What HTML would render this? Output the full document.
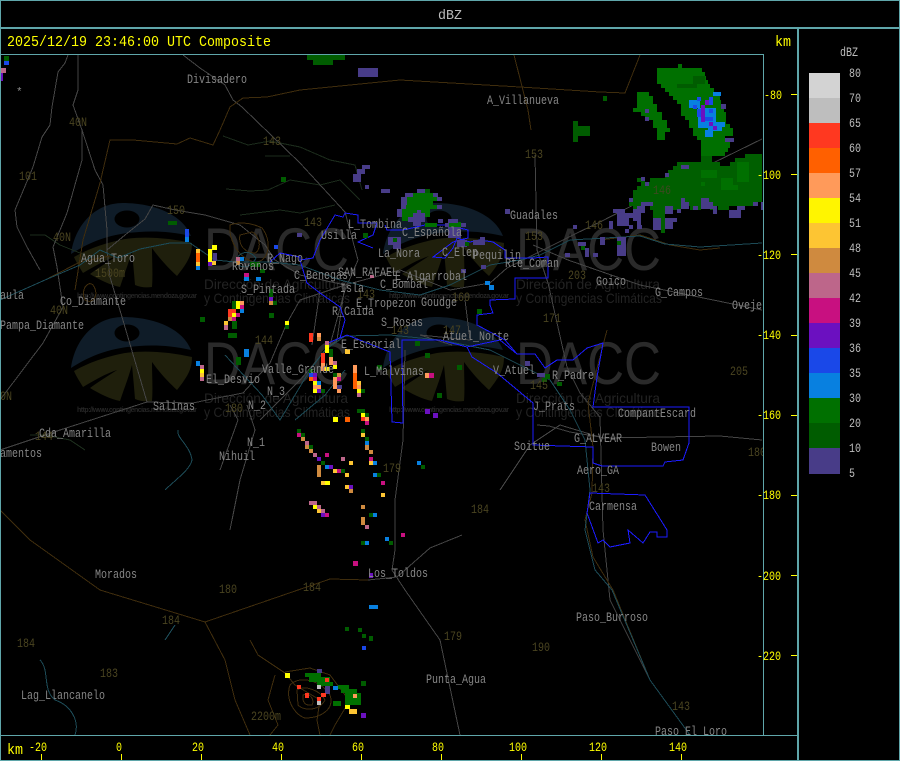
<!DOCTYPE html>
<html><head><meta charset="utf-8"><title>dBZ Composite</title>
<style>
html,body{margin:0;padding:0;background:#000;width:900px;height:761px;overflow:hidden}
svg{display:block}
text{font-family:"Liberation Mono","DejaVu Sans Mono",monospace}
.l text{font-size:12.5px;fill:#858585}
.n text{font-size:12.5px;fill:#4a4420}
.w{font-family:"Liberation Sans",sans-serif!important;fill:#2a2a2a}
.u{font-family:"Liberation Sans",sans-serif!important;fill:#262626;font-size:7px;font-weight:bold}
.s{font-family:"Liberation Sans",sans-serif!important;fill:#232323;font-size:14px}
.y text{font-size:12.5px;fill:#ffff00}
.c text{font-size:12.5px;fill:#bcbcbc}
</style></head><body>
<svg width="900" height="761" viewBox="0 0 900 761" xmlns="http://www.w3.org/2000/svg">
<defs>
<clipPath id="pl"><rect x="1" y="55" width="762" height="680"/></clipPath>
<g id="logo">
<path d="M71 254C75 225 95 203 123 203C155 203 183 215 191 236C165 230 145 231 127 233C105 236 88 243 71 254Z" fill="#0f1c28"/>
<ellipse cx="127" cy="219" rx="12.5" ry="8.5" fill="#000"/>
<path d="M74 257C90 248 105 243 125 239C145 236 170 238 192 243C192 255 188 262 177 276C165 265 157 255 152 248C152 262 153 275 152 287C145 288 140 287 135 285C134 272 133 262 132 251C128 265 124 275 120 287C110 285 100 280 90 274C98 268 108 262 117 256C105 260 95 266 83 273C80 268 76 262 74 257Z" fill="#1f1f0c"/>
</g>
</defs>
<rect width="900" height="761" fill="#000"/>
<g clip-path="url(#pl)">
<!-- watermark -->
<use href="#logo"/><use href="#logo" x="312"/><use href="#logo" y="114"/><use href="#logo" x="312" y="114"/>
<text class="w" x="204" y="270" font-size="60" textLength="145" lengthAdjust="spacingAndGlyphs">DACC</text>
<text class="w" x="516" y="270" font-size="60" textLength="145" lengthAdjust="spacingAndGlyphs">DACC</text>
<text class="w" x="204" y="384" font-size="60" textLength="145" lengthAdjust="spacingAndGlyphs">DACC</text>
<text class="w" x="516" y="384" font-size="60" textLength="145" lengthAdjust="spacingAndGlyphs">DACC</text>
<text class="s" x="204" y="289" textLength="144" lengthAdjust="spacingAndGlyphs">Dirección de Agricultura</text>
<text class="s" x="204" y="303" textLength="146" lengthAdjust="spacingAndGlyphs">y Contingencias Climáticas</text>
<text class="s" x="516" y="289" textLength="144" lengthAdjust="spacingAndGlyphs">Dirección de Agricultura</text>
<text class="s" x="516" y="303" textLength="146" lengthAdjust="spacingAndGlyphs">y Contingencias Climáticas</text>
<text class="s" x="204" y="403" textLength="144" lengthAdjust="spacingAndGlyphs">Dirección de Agricultura</text>
<text class="s" x="204" y="417" textLength="146" lengthAdjust="spacingAndGlyphs">y Contingencias Climáticas</text>
<text class="s" x="516" y="403" textLength="144" lengthAdjust="spacingAndGlyphs">Dirección de Agricultura</text>
<text class="s" x="516" y="417" textLength="146" lengthAdjust="spacingAndGlyphs">y Contingencias Climáticas</text>
<text class="u" x="77" y="298" textLength="120">http://www.contingencias.mendoza.gov.ar</text>
<text class="u" x="389" y="298" textLength="120">http://www.contingencias.mendoza.gov.ar</text>
<text class="u" x="77" y="412" textLength="120">http://www.contingencias.mendoza.gov.ar</text>
<text class="u" x="389" y="412" textLength="120">http://www.contingencias.mendoza.gov.ar</text>
<!-- map lines -->
<g fill="none" stroke-width="1" shape-rendering="crispEdges">
<g stroke="#1b2b1b">
<path d="M223 136L248 145L270 141L300 147L330 160L355 165L362 190"/>
<path d="M265 156L290 156"/>
<path d="M226 189L250 191L268 190L290 180L320 185L340 180L360 200"/>
<path d="M240 215L280 210L300 213L335 205"/>
<path d="M30 435L45 435L70 440L85 450M30 235L45 235L60 245L85 255"/>
</g>
<g stroke="#454545">
<path d="M183 55L200 68L225 85L233 100L242 107L300 163L345 212L358 260L345 290L330 345L300 380L260 420"/>
<path d="M68 55L65 63L58 72L52 107L50 125L42 137L33 167L15 210L17 227L27 247L40 270"/>
<path d="M78 55L78 90L73 105L82 130L95 170L103 185L107 230L107 250L110 277L122 317L147 402"/>
<path d="M82 130L82 160L67 213L53 247L57 267L63 307L43 343L0 400"/>
<path d="M0 450L60 430L147 402L193 403L207 400L243 393L270 363L287 323L300 300L345 285L400 270L450 290L490 283L507 268L537 253L577 233L600 222L657 193L713 163L762 139"/>
<path d="M107 250L125 235L145 219L153 205L175 210L205 215L240 225L265 245L275 260L300 275L345 285"/>
<path d="M535 155L537 250L548 283L567 367L580 393L600 417L603 530L610 600L650 680L690 735"/>
<path d="M345 285L337 340L325 350M320 290L312 345M405 350L403 440L395 500L395 550L392 570L405 590L440 640L460 735"/>
<path d="M462 535L430 548L397 577L368 580"/>
<path d="M500 490L530 445L560 425L603 438L720 436L762 440"/>
<path d="M537 425L549 426L570 432L600 437M533 245L568 260L640 285L762 310"/>
<path d="M230 405L238 420L220 470M247 405L255 430L240 480L230 530"/>
<path d="M452 345L420 335L470 340L465 300"/>
</g>
<g stroke="#3f2d0d">
<path d="M368 580L330 579L205 622L100 590L30 540L0 510"/>
<path d="M205 622L225 660L235 700L250 735"/>
<path d="M300 90L267 97L243 98L230 107L220 130L213 145L190 138L177 144L133 140L110 140L100 183L83 240L75 290"/>
<path d="M300 90L400 80L520 87L600 92L625 93L640 55"/>
<path d="M514 55L528 110L531 130"/>
<path d="M607 330L588 403L593 447L592 493L585 520L593 557L613 590L650 680L690 735"/>
<path d="M0 300L45 280L80 262L110 256"/>
<path d="M250 640L258 655L285 673L295 685L320 700L317 720L320 735"/>
<path d="M285 672L310 668L330 675L345 695L350 700L335 725L330 735"/>
<path d="M290 685C300 675 320 680 330 695C335 710 320 718 305 718C295 715 285 700 290 685Z"/>
<path d="M297 690C305 685 320 690 325 700C320 710 305 712 298 705Z M303 695C310 692 315 700 312 705C305 706 302 702 303 695Z"/>
<path d="M275 675L268 700L278 725L270 735"/>
<path d="M230 225C228 240 240 260 255 262C270 262 272 240 262 228C250 222 238 222 230 225Z"/>
<path d="M240 235C238 245 245 253 255 253C262 250 260 235 252 232Z M85 300C80 290 88 280 93 285C100 295 93 305 85 300Z"/>
<path d="M600 240L640 235L670 245L700 250L720 248"/>
</g>
<g stroke="#1c4a56">
<path d="M0 300L45 280L80 265L100 250L118 258L140 249L170 243L190 243L215 260L235 262L270 262L300 265L340 280L380 290L420 295L450 285L490 265L520 260L540 255L570 240L605 238L640 236L665 244L700 247L762 243"/>
<path d="M225 355L262 395L280 420L310 370L325 350L345 336L390 335L440 340L490 350L520 365L550 380L570 410L585 440L590 490L585 530L595 570L612 590L650 680L690 735"/>
<path d="M178 430C176 438 190 445 192 460C190 470 175 480 165 490M40 660C50 670 42 690 55 700C70 705 80 720 75 735"/>
<path d="M345 370L325 395L295 420M175 625L165 640"/>
<path d="M235 262C240 250 250 250 256 258C250 270 240 268 235 262Z"/>
</g>
<g stroke="#1c1cff">
<path d="M270 262L280 253L300 257L300 260L313 258L320 240L335 215L343 217L345 213L358 215L358 223L377 223L373 235L358 242L373 248"/>
<path d="M300 260L307 283L320 293L340 307L345 320L340 338L328 343L347 335L390 352L392 422L403 423L402 353L402 340L440 340L467 347L472 357L497 373L533 403L533 445L562 446L593 447L593 463L602 466L663 466L665 462L683 460L689 443L689 407L618 407L593 407L597 377L603 343L587 348L573 360L557 360L545 368L535 354L517 354L500 340L467 347"/>
<path d="M590 493L645 495L667 530L667 537L657 537L657 532L650 532L643 543L628 530L630 543L610 547L603 540L598 543L587 513Z"/>
<path d="M385 225L387 230L403 230L425 225L447 225L468 230L468 238L453 242L433 257L445 258L453 248L457 238L470 242L480 240L493 242L505 250L505 258L533 258L548 257L548 278L515 278L515 299L490 300L490 305L493 313L477 315L477 325L505 340L517 354"/>
</g>
</g>
<!-- radar: lower storm base -->
<path fill="#005f00" d="M701 150h11v12h-11zM745 154h17v4h-17zM735 158h27v4h-27zM677 162h43v4h-43zM730 162h32v4h-32zM673 166h89v4h-89zM668 170h94v4h-94zM665 174h97v4h-97zM637 178h8v4h-8zM650 178h112v4h-112zM641 182h121v4h-121zM637 186h125v4h-125zM633 190h129v12h-129zM629 202h126v4h-126zM633 206h4v4h-4zM650 206h31v4h-31zM690 206h11v4h-11zM710 206h3v4h-3zM718 206h11v4h-11zM653 210h12v8h-12zM661 218h4v15h-4z"/>
<!-- radar: green -->
<path fill="#007000" d="M701 170h16v8h-16zM721 178h12v12h-12zM737 162h12v20h-12zM733 185h5v5h-5zM701 182h4v4h-4zM678 64h4v4h-4zM657 68h45v4h-45zM657 72h48v4h-48zM657 76h49v4h-49zM657 80h51v4h-51zM661 84h49v4h-49zM665 88h49v4h-49zM669 92h45v4h-45zM673 96h47v4h-47zM677 100h44v4h-44zM681 104h43v8h-43zM681 112h45v4h-45zM685 116h41v4h-41zM689 120h37v4h-37zM689 124h41v4h-41zM693 128h40v8h-40zM697 136h28v4h-28zM701 140h29v8h-29zM701 148h27v4h-27zM701 152h24v4h-24zM637 92h12v4h-12zM637 96h16v8h-16zM637 104h20v4h-20zM633 108h24v4h-24zM641 112h21v4h-21zM645 116h17v4h-17zM653 120h14v8h-14zM657 128h13v4h-13zM657 132h8v8h-8zM413 193h20v4h-20zM407 197h30v4h-30zM407 201h26v4h-26zM406 205h31v4h-31zM402 209h28v4h-28zM402 213h11v4h-11zM425 213h5v4h-5zM402 217h8v4h-8zM305 673h16v4h-16zM309 677h21v5h-21zM317 682h16v4h-16zM338 685h11v4h-11zM341 689h16v4h-16zM345 693h16v12h-16zM333 701h8v5h-8zM425 223h12v4h-12zM449 222h12v5h-12z"/>
<!-- radar: dark green -->
<path fill="#005c00" d="M4 56h5v5h-5zM307 54h38v6h-38zM313 60h20v5h-20zM603 96h4v5h-4zM677 84h20v4h-20zM693 76h12v8h-12zM573 121h5v21h-5zM578 126h12v10h-12zM357 169h4v4h-4zM281 177h5v5h-5zM168 221h9v4h-9zM260 269h5v4h-5zM269 313h5v5h-5zM200 317h5v5h-5zM228 333h9v5h-9zM232 321h5v8h-5zM232 301h5v8h-5zM236 357h5v8h-5zM269 289h4v8h-4zM273 301h4v4h-4zM285 325h4v4h-4zM415 341h5v5h-5zM425 353h5v5h-5zM457 365h5v5h-5zM437 393h5v5h-5zM377 365h5v5h-5zM363 233h5v5h-5zM477 309h5v5h-5zM545 374h5v5h-5zM542 378h5v4h-5zM557 382h5v4h-5zM357 409h8v4h-8zM365 413h4v4h-4zM361 429h4v4h-4zM365 437h4v4h-4zM297 429h4v4h-4zM301 433h4v4h-4zM309 445h4v4h-4zM321 461h4v4h-4zM341 469h4v4h-4zM377 473h4v4h-4zM369 513h4v4h-4zM389 541h4v4h-4zM361 541h4v4h-4zM421 465h4v4h-4zM369 636h4v5h-4zM345 627h4v4h-4zM358 628h4v4h-4zM362 634h4v4h-4zM361 681h5v5h-5zM425 189h5v4h-5zM329 349h4v8h-4zM309 369h4v4h-4zM333 373h4v4h-4zM321 389h4v4h-4zM361 389h4v4h-4zM250 262h10v5h-10z"/>
<!-- radar: indigo -->
<path fill="#483c88" d="M358 68h20v9h-20zM362 165h8v4h-8zM357 169h8v5h-8zM353 174h8v8h-8zM365 185h4v4h-4zM381 189h9v4h-9zM417 189h8v4h-8zM405 193h8v4h-8zM433 193h5v4h-5zM401 197h6v4h-6zM437 197h5v4h-5zM401 201h6v4h-6zM401 205h5v4h-5zM437 205h5v4h-5zM397 209h5v4h-5zM417 210h4v4h-4zM397 213h5v4h-5zM413 213h12v4h-12zM408 217h17v5h-17zM438 219h5v4h-5zM448 219h10v4h-10zM413 222h8v4h-8zM445 223h4v4h-4zM461 223h5v4h-5zM388 237h13v8h-13zM393 245h8v4h-8zM448 227h13v11h-13zM457 240h10v7h-10zM473 240h12v5h-12zM480 237h5v3h-5zM505 209h5v5h-5zM481 265h5v4h-5zM461 269h5v4h-5zM573 225h4v4h-4zM578 242h8v4h-8zM565 253h5v4h-5zM585 248h4v9h-4zM593 253h5v4h-5zM525 361h5v5h-5zM537 373h8v4h-8zM681 165h8v4h-8zM665 173h4v4h-4zM641 177h4v4h-4zM645 182h4v4h-4zM681 198h4v4h-4zM681 202h8v7h-8zM701 198h8v11h-8zM709 202h4v7h-4zM713 206h4v8h-4zM693 206h5v4h-5zM665 206h8v8h-8zM677 209h4v4h-4zM729 210h12v8h-12zM737 206h8v4h-8zM753 202h5v4h-5zM761 202h2v8h-2zM629 198h4v4h-4zM641 202h12v4h-12zM637 206h8v4h-8zM633 209h12v4h-12zM613 209h12v4h-12zM617 213h16v5h-16zM633 213h8v5h-8zM617 218h12v8h-12zM633 218h8v3h-8zM637 221h4v4h-4zM629 225h4v4h-4zM637 225h5v4h-5zM609 221h4v8h-4zM625 229h4v4h-4zM653 218h8v12h-8zM665 218h8v11h-8zM673 218h4v4h-4zM600 237h5v8h-5zM617 237h9v19h-9zM645 109h4v4h-4zM645 117h4v4h-4zM725 138h9v4h-9zM721 104h5v5h-5zM297 233h5v4h-5zM317 669h5v4h-5zM325 686h5v8h-5zM337 385h5v4h-5zM213 253h4v8h-4z"/>
<path fill="#005c00" d="M393 238h4v4h-4zM465 242h4v4h-4zM581 246h4v4h-4zM617 241h4v4h-4z"/>
<!-- radar: other colours -->
<path fill="#0880e0" d="M713 92h8v4h-8zM689 100h11v8h-11zM698 108h18v20h-18zM713 122h12v5h-12zM708 127h14v4h-14zM705 130h8v7h-8zM240 257h4v4h-4zM244 277h5v4h-5zM256 277h5v4h-5zM185 237h4v5h-4zM196 266h4v4h-4zM240 309h4v4h-4zM244 349h5v8h-5zM196 361h4v5h-4zM317 381h4v4h-4zM365 441h4v4h-4zM373 461h4v4h-4zM325 465h4v4h-4zM373 473h4v4h-4zM373 513h4v4h-4zM385 537h4v4h-4zM365 541h4v4h-4zM417 461h4v4h-4zM369 605h9v4h-9zM485 281h5v4h-5zM489 285h5v5h-5zM333 686h5v4h-5z"/>
<path fill="#1a48e8" d="M697 97h4v4h-4zM693 105h4v4h-4zM709 97h4v8h-4zM697 109h4v8h-4zM705 117h8v4h-8zM709 109h4v4h-4zM185 229h4v8h-4zM274 245h4v4h-4zM309 373h4v4h-4zM362 646h4v4h-4zM4 61h5v4h-5z"/>
<path fill="#6b10c0" d="M705 100h4v5h-4zM701 105h4v17h-4zM709 122h4v4h-4zM713 126h4v4h-4zM208 262h4v4h-4zM269 297h4v4h-4zM313 373h4v4h-4zM317 389h4v4h-4zM317 457h4v4h-4zM329 465h4v4h-4zM349 485h4v4h-4zM321 513h4v4h-4zM425 409h5v5h-5zM433 413h5v5h-5zM369 573h4v5h-4zM361 713h5v5h-5zM1 73h2v8h-2z"/>
<path fill="#c81080" d="M244 273h5v4h-5zM236 313h4v4h-4zM240 305h4v4h-4zM232 317h4v4h-4zM313 377h4v4h-4zM337 377h4v4h-4zM429 373h5v5h-5zM365 421h4v4h-4zM369 457h4v4h-4zM381 481h4v4h-4zM401 533h4v4h-4zM353 561h5v5h-5zM297 433h4v4h-4zM325 453h4v4h-4zM337 469h4v4h-4zM325 513h4v4h-4z"/>
<path fill="#bd668a" d="M1 68h5v5h-5zM236 257h4v4h-4zM224 325h4v5h-4zM200 365h4v4h-4zM200 377h4v4h-4zM333 361h4v4h-4zM357 393h4v4h-4zM325 341h4v4h-4zM370 275h4v3h-4zM305 441h4v4h-4zM313 453h4v4h-4zM341 457h4v4h-4zM309 501h8v4h-8zM317 505h4v4h-4zM321 509h4v4h-4zM365 525h4v4h-4z"/>
<path fill="#cf8a3f" d="M236 261h4v4h-4zM269 301h4v4h-4zM228 317h4v4h-4zM337 373h4v4h-4zM317 337h4v4h-4zM301 437h4v4h-4zM305 445h4v4h-4zM309 449h4v4h-4zM317 465h4v12h-4zM365 445h4v5h-4zM369 450h4v4h-4zM349 489h4v4h-4zM361 505h4v4h-4zM361 517h4v8h-4z"/>
<path fill="#fdc533" d="M196 249h4v4h-4zM196 262h4v4h-4zM224 321h4v4h-4zM200 373h4v4h-4zM345 349h5v5h-5zM357 381h4v4h-4zM361 433h4v4h-4zM369 461h4v4h-4zM333 469h4v4h-4zM345 473h4v4h-4zM349 461h4v4h-4zM321 481h4v4h-4zM345 485h4v4h-4zM317 509h4v4h-4zM381 493h4v4h-4zM349 709h8v5h-8zM212 261h4v4h-4z"/>
<path fill="#ffff00" d="M212 245h5v5h-5zM208 249h4v5h-4zM208 254h4v8h-4zM285 321h4v4h-4zM236 301h4v4h-4zM236 305h4v4h-4zM232 313h4v4h-4zM200 369h4v4h-4zM325 345h4v8h-4zM325 367h5v4h-5zM333 365h4v4h-4zM313 381h4v4h-4zM313 389h4v4h-4zM357 389h4v4h-4zM333 417h5v5h-5zM361 413h4v4h-4zM325 481h5v4h-5zM313 505h4v4h-4zM285 673h5v5h-5zM345 705h5v4h-5z"/>
<path fill="#ff9a5a" d="M240 301h4v4h-4zM329 357h4v4h-4zM329 361h4v4h-4zM317 333h4v4h-4zM313 385h8v4h-8zM333 377h4v12h-4zM337 389h4v4h-4zM353 365h4v8h-4zM357 385h4v4h-4zM365 417h4v4h-4zM425 373h4v5h-4zM321 363h4v8h-4zM353 694h4v4h-4z"/>
<path fill="#ff6000" d="M196 253h4v9h-4zM309 377h4v4h-4zM345 417h5v5h-5zM353 373h4v16h-4z"/>
<path fill="#ff3820" d="M309 333h4v9h-4zM228 309h4v8h-4zM232 309h4v4h-4zM321 353h4v10h-4zM361 417h4v4h-4zM325 678h4v4h-4zM297 685h4v4h-4zM305 693h4v5h-4zM321 693h5v4h-5zM317 697h4v4h-4z"/>
<path fill="#bebebe" d="M317 685h4v4h-4zM317 701h4v4h-4z"/>
<!-- labels -->
<text x="16" y="95" font-size="11" fill="#8c8c8c">*</text>
<g class="n">
<text x="69" y="126" textLength="18" lengthAdjust="spacingAndGlyphs">40N</text>
<text x="19" y="180" textLength="18" lengthAdjust="spacingAndGlyphs">101</text>
<text x="263" y="145" textLength="18" lengthAdjust="spacingAndGlyphs">143</text>
<text x="167" y="214" textLength="18" lengthAdjust="spacingAndGlyphs">150</text>
<text x="53" y="241" textLength="18" lengthAdjust="spacingAndGlyphs">40N</text>
<text x="50" y="314" textLength="18" lengthAdjust="spacingAndGlyphs">40N</text>
<text x="0" y="400" textLength="12" lengthAdjust="spacingAndGlyphs">0N</text>
<text x="304" y="226" textLength="18" lengthAdjust="spacingAndGlyphs">143</text>
<text x="653" y="194" textLength="18" lengthAdjust="spacingAndGlyphs" style="fill:#3c4a20">146</text>
<text x="525" y="158" textLength="18" lengthAdjust="spacingAndGlyphs">153</text>
<text x="525" y="240" textLength="18" lengthAdjust="spacingAndGlyphs">153</text>
<text x="585" y="229" textLength="18" lengthAdjust="spacingAndGlyphs">146</text>
<text x="568" y="279" textLength="18" lengthAdjust="spacingAndGlyphs">203</text>
<text x="543" y="322" textLength="18" lengthAdjust="spacingAndGlyphs">171</text>
<text x="95" y="277" textLength="30" lengthAdjust="spacingAndGlyphs">1500m</text>
<text x="452" y="301" textLength="18" lengthAdjust="spacingAndGlyphs">160</text>
<text x="357" y="298" textLength="18" lengthAdjust="spacingAndGlyphs">143</text>
<text x="255" y="344" textLength="18" lengthAdjust="spacingAndGlyphs">144</text>
<text x="530" y="389" textLength="18" lengthAdjust="spacingAndGlyphs">145</text>
<text x="391" y="334" textLength="18" lengthAdjust="spacingAndGlyphs">143</text>
<text x="443" y="334" textLength="18" lengthAdjust="spacingAndGlyphs">147</text>
<text x="225" y="412" textLength="18" lengthAdjust="spacingAndGlyphs">180</text>
<text x="383" y="472" textLength="18" lengthAdjust="spacingAndGlyphs">179</text>
<text x="471" y="513" textLength="18" lengthAdjust="spacingAndGlyphs">184</text>
<text x="592" y="492" textLength="18" lengthAdjust="spacingAndGlyphs">143</text>
<text x="303" y="591" textLength="18" lengthAdjust="spacingAndGlyphs">184</text>
<text x="162" y="624" textLength="18" lengthAdjust="spacingAndGlyphs">184</text>
<text x="219" y="593" textLength="18" lengthAdjust="spacingAndGlyphs">180</text>
<text x="444" y="640" textLength="18" lengthAdjust="spacingAndGlyphs">179</text>
<text x="532" y="651" textLength="18" lengthAdjust="spacingAndGlyphs">190</text>
<text x="17" y="647" textLength="18" lengthAdjust="spacingAndGlyphs">184</text>
<text x="100" y="677" textLength="18" lengthAdjust="spacingAndGlyphs">183</text>
<text x="672" y="710" textLength="18" lengthAdjust="spacingAndGlyphs">143</text>
<text x="251" y="720" textLength="30" lengthAdjust="spacingAndGlyphs">2200m</text>
<text x="730" y="375" textLength="18" lengthAdjust="spacingAndGlyphs">205</text>
<text x="35" y="440" textLength="18" lengthAdjust="spacingAndGlyphs">144</text>
<text x="748" y="456" textLength="18" lengthAdjust="spacingAndGlyphs">180</text>
</g>
<g class="l">
<text x="187" y="83" textLength="60" lengthAdjust="spacingAndGlyphs">Divisadero</text>
<text x="487" y="104" textLength="72" lengthAdjust="spacingAndGlyphs">A_Villanueva</text>
<text x="510" y="219" textLength="48" lengthAdjust="spacingAndGlyphs">Guadales</text>
<text x="348" y="228" textLength="54" lengthAdjust="spacingAndGlyphs">L_Tombina</text>
<text x="321" y="239" textLength="36" lengthAdjust="spacingAndGlyphs">Usilla</text>
<text x="402" y="236" textLength="60" lengthAdjust="spacingAndGlyphs">C_Española</text>
<text x="378" y="257" textLength="42" lengthAdjust="spacingAndGlyphs">La_Nora</text>
<text x="442" y="256" textLength="36" lengthAdjust="spacingAndGlyphs">C_Elep</text>
<text x="473" y="259" textLength="48" lengthAdjust="spacingAndGlyphs">Pequilin</text>
<text x="505" y="267" textLength="54" lengthAdjust="spacingAndGlyphs">Rte_Coman</text>
<text x="81" y="262" textLength="54" lengthAdjust="spacingAndGlyphs">Agua_Toro</text>
<text x="267" y="262" textLength="36" lengthAdjust="spacingAndGlyphs">R_Nago</text>
<text x="232" y="270" textLength="42" lengthAdjust="spacingAndGlyphs">Rovanos</text>
<text x="241" y="293" textLength="54" lengthAdjust="spacingAndGlyphs">S_Pintada</text>
<text x="294" y="279" textLength="54" lengthAdjust="spacingAndGlyphs">C_Benegas</text>
<text x="338" y="276" textLength="60" lengthAdjust="spacingAndGlyphs">SAN_RAFAEL</text>
<text x="395" y="280" textLength="72" lengthAdjust="spacingAndGlyphs">E_Algarrobal</text>
<text x="380" y="288" textLength="48" lengthAdjust="spacingAndGlyphs">C_Bombal</text>
<text x="596" y="285" textLength="30" lengthAdjust="spacingAndGlyphs">Goico</text>
<text x="655" y="296" textLength="48" lengthAdjust="spacingAndGlyphs">G_Campos</text>
<text x="732" y="309" textLength="36" lengthAdjust="spacingAndGlyphs">Ovejer</text>
<text x="340" y="292" textLength="24" lengthAdjust="spacingAndGlyphs">Isla</text>
<text x="0" y="299" textLength="24" lengthAdjust="spacingAndGlyphs">aula</text>
<text x="60" y="305" textLength="66" lengthAdjust="spacingAndGlyphs">Co_Diamante</text>
<text x="356" y="307" textLength="60" lengthAdjust="spacingAndGlyphs">E_Tropezon</text>
<text x="421" y="306" textLength="36" lengthAdjust="spacingAndGlyphs">Goudge</text>
<text x="332" y="315" textLength="42" lengthAdjust="spacingAndGlyphs">R_Caida</text>
<text x="381" y="326" textLength="42" lengthAdjust="spacingAndGlyphs">S_Rosas</text>
<text x="0" y="329" textLength="84" lengthAdjust="spacingAndGlyphs">Pampa_Diamante</text>
<text x="443" y="340" textLength="66" lengthAdjust="spacingAndGlyphs">Atuel_Norte</text>
<text x="341" y="348" textLength="60" lengthAdjust="spacingAndGlyphs">E_Escorial</text>
<text x="364" y="375" textLength="60" lengthAdjust="spacingAndGlyphs">L_Malvinas</text>
<text x="493" y="374" textLength="42" lengthAdjust="spacingAndGlyphs">V_Atuel</text>
<text x="552" y="379" textLength="42" lengthAdjust="spacingAndGlyphs">R_Padre</text>
<text x="262" y="373" textLength="72" lengthAdjust="spacingAndGlyphs">Valle_Grande</text>
<text x="206" y="383" textLength="54" lengthAdjust="spacingAndGlyphs">El_Desvio</text>
<text x="267" y="395" textLength="18" lengthAdjust="spacingAndGlyphs">N_3</text>
<text x="248" y="409" textLength="18" lengthAdjust="spacingAndGlyphs">N_2</text>
<text x="153" y="410" textLength="42" lengthAdjust="spacingAndGlyphs">Salinas</text>
<text x="533" y="410" textLength="42" lengthAdjust="spacingAndGlyphs">J_Prats</text>
<text x="618" y="417" textLength="78" lengthAdjust="spacingAndGlyphs">CompantEscard</text>
<text x="39" y="437" textLength="72" lengthAdjust="spacingAndGlyphs">Cda_Amarilla</text>
<text x="574" y="442" textLength="48" lengthAdjust="spacingAndGlyphs">G_ALVEAR</text>
<text x="247" y="446" textLength="18" lengthAdjust="spacingAndGlyphs">N_1</text>
<text x="514" y="450" textLength="36" lengthAdjust="spacingAndGlyphs">Soitue</text>
<text x="651" y="451" textLength="30" lengthAdjust="spacingAndGlyphs">Bowen</text>
<text x="219" y="460" textLength="36" lengthAdjust="spacingAndGlyphs">Nihuil</text>
<text x="0" y="457" textLength="42" lengthAdjust="spacingAndGlyphs">amentos</text>
<text x="577" y="474" textLength="42" lengthAdjust="spacingAndGlyphs">Aero_GA</text>
<text x="589" y="510" textLength="48" lengthAdjust="spacingAndGlyphs">Carmensa</text>
<text x="95" y="578" textLength="42" lengthAdjust="spacingAndGlyphs">Morados</text>
<text x="368" y="577" textLength="60" lengthAdjust="spacingAndGlyphs">Los_Toldos</text>
<text x="576" y="621" textLength="72" lengthAdjust="spacingAndGlyphs">Paso_Burroso</text>
<text x="426" y="683" textLength="60" lengthAdjust="spacingAndGlyphs">Punta_Agua</text>
<text x="21" y="699" textLength="84" lengthAdjust="spacingAndGlyphs">Lag_Llancanelo</text>
<text x="655" y="735" textLength="72" lengthAdjust="spacingAndGlyphs">Paso_El_Loro</text>
</g>
</g>
<!-- frame -->
<g fill="#5fa6aa">
<rect x="0" y="0" width="900" height="1"/>
<rect x="0" y="27" width="900" height="2"/>
<rect x="0" y="54" width="764" height="1"/>
<rect x="0" y="735" width="798" height="1"/>
<rect x="0" y="760" width="900" height="1"/>
<rect x="0" y="0" width="1" height="761"/>
<rect x="899" y="0" width="1" height="761"/>
<rect x="763" y="54" width="1" height="682"/>
<rect x="797" y="28" width="2" height="733"/>
</g>
<!-- header text -->
<text x="438" y="19" font-size="14" textLength="24" lengthAdjust="spacingAndGlyphs" fill="#bcbcbc">dBZ</text>
<text x="7" y="46" font-size="15" textLength="264" lengthAdjust="spacingAndGlyphs" fill="#ffff00">2025/12/19 23:46:00 UTC Composite</text>
<text x="775" y="46" font-size="15" textLength="16" lengthAdjust="spacingAndGlyphs" fill="#ffff00">km</text>
<text x="7" y="754" font-size="15" textLength="16" lengthAdjust="spacingAndGlyphs" fill="#ffff00">km</text>
<!-- axis ticks -->
<g fill="#ffff00">
<rect x="791" y="94" width="6" height="1"/><rect x="791" y="174" width="6" height="1"/><rect x="791" y="254" width="6" height="1"/><rect x="791" y="335" width="6" height="1"/><rect x="791" y="415" width="6" height="1"/><rect x="791" y="495" width="6" height="1"/><rect x="791" y="575" width="6" height="1"/><rect x="791" y="655" width="6" height="1"/>
<rect x="41" y="754" width="1" height="6"/><rect x="121" y="754" width="1" height="6"/><rect x="201" y="754" width="1" height="6"/><rect x="281" y="754" width="1" height="6"/><rect x="361" y="754" width="1" height="6"/><rect x="441" y="754" width="1" height="6"/><rect x="521" y="754" width="1" height="6"/><rect x="601" y="754" width="1" height="6"/><rect x="681" y="754" width="1" height="6"/>
</g>
<g class="y">
<text x="764" y="99" textLength="18" lengthAdjust="spacingAndGlyphs">-80</text>
<text x="757" y="179" textLength="24" lengthAdjust="spacingAndGlyphs">-100</text>
<text x="757" y="259" textLength="24" lengthAdjust="spacingAndGlyphs">-120</text>
<text x="757" y="339" textLength="24" lengthAdjust="spacingAndGlyphs">-140</text>
<text x="757" y="419" textLength="24" lengthAdjust="spacingAndGlyphs">-160</text>
<text x="757" y="499" textLength="24" lengthAdjust="spacingAndGlyphs">-180</text>
<text x="757" y="580" textLength="24" lengthAdjust="spacingAndGlyphs">-200</text>
<text x="757" y="660" textLength="24" lengthAdjust="spacingAndGlyphs">-220</text>
<text x="29" y="751" textLength="18" lengthAdjust="spacingAndGlyphs">-20</text>
<text x="116" y="751" textLength="6" lengthAdjust="spacingAndGlyphs">0</text>
<text x="192" y="751" textLength="12" lengthAdjust="spacingAndGlyphs">20</text>
<text x="272" y="751" textLength="12" lengthAdjust="spacingAndGlyphs">40</text>
<text x="352" y="751" textLength="12" lengthAdjust="spacingAndGlyphs">60</text>
<text x="432" y="751" textLength="12" lengthAdjust="spacingAndGlyphs">80</text>
<text x="509" y="751" textLength="18" lengthAdjust="spacingAndGlyphs">100</text>
<text x="589" y="751" textLength="18" lengthAdjust="spacingAndGlyphs">120</text>
<text x="669" y="751" textLength="18" lengthAdjust="spacingAndGlyphs">140</text>
</g>
<!-- colour bar -->
<rect x="809" y="73" width="31" height="25" fill="#d3d3d3"/>
<rect x="809" y="98" width="31" height="25" fill="#bebebe"/>
<rect x="809" y="123" width="31" height="25" fill="#ff3820"/>
<rect x="809" y="148" width="31" height="25" fill="#ff6000"/>
<rect x="809" y="173" width="31" height="25" fill="#ff9a5a"/>
<rect x="809" y="198" width="31" height="25" fill="#fff500"/>
<rect x="809" y="223" width="31" height="25" fill="#fdc533"/>
<rect x="809" y="248" width="31" height="25" fill="#cf8a3f"/>
<rect x="809" y="273" width="31" height="25" fill="#bd668a"/>
<rect x="809" y="298" width="31" height="25" fill="#c81080"/>
<rect x="809" y="323" width="31" height="25" fill="#6b10c0"/>
<rect x="809" y="348" width="31" height="25" fill="#1a48e8"/>
<rect x="809" y="373" width="31" height="25" fill="#0880e0"/>
<rect x="809" y="398" width="31" height="25" fill="#007000"/>
<rect x="809" y="423" width="31" height="25" fill="#005c00"/>
<rect x="809" y="448" width="31" height="26" fill="#483c88"/>
<g class="c">
<text x="840" y="56" textLength="18" lengthAdjust="spacingAndGlyphs">dBZ</text>
<text x="849" y="77" textLength="12" lengthAdjust="spacingAndGlyphs">80</text>
<text x="849" y="102" textLength="12" lengthAdjust="spacingAndGlyphs">70</text>
<text x="849" y="127" textLength="12" lengthAdjust="spacingAndGlyphs">65</text>
<text x="849" y="152" textLength="12" lengthAdjust="spacingAndGlyphs">60</text>
<text x="849" y="177" textLength="12" lengthAdjust="spacingAndGlyphs">57</text>
<text x="849" y="202" textLength="12" lengthAdjust="spacingAndGlyphs">54</text>
<text x="849" y="227" textLength="12" lengthAdjust="spacingAndGlyphs">51</text>
<text x="849" y="252" textLength="12" lengthAdjust="spacingAndGlyphs">48</text>
<text x="849" y="277" textLength="12" lengthAdjust="spacingAndGlyphs">45</text>
<text x="849" y="302" textLength="12" lengthAdjust="spacingAndGlyphs">42</text>
<text x="849" y="327" textLength="12" lengthAdjust="spacingAndGlyphs">39</text>
<text x="849" y="352" textLength="12" lengthAdjust="spacingAndGlyphs">36</text>
<text x="849" y="377" textLength="12" lengthAdjust="spacingAndGlyphs">35</text>
<text x="849" y="402" textLength="12" lengthAdjust="spacingAndGlyphs">30</text>
<text x="849" y="427" textLength="12" lengthAdjust="spacingAndGlyphs">20</text>
<text x="849" y="452" textLength="12" lengthAdjust="spacingAndGlyphs">10</text>
<text x="849" y="477" textLength="6" lengthAdjust="spacingAndGlyphs">5</text>
</g>
</svg>
</body></html>
